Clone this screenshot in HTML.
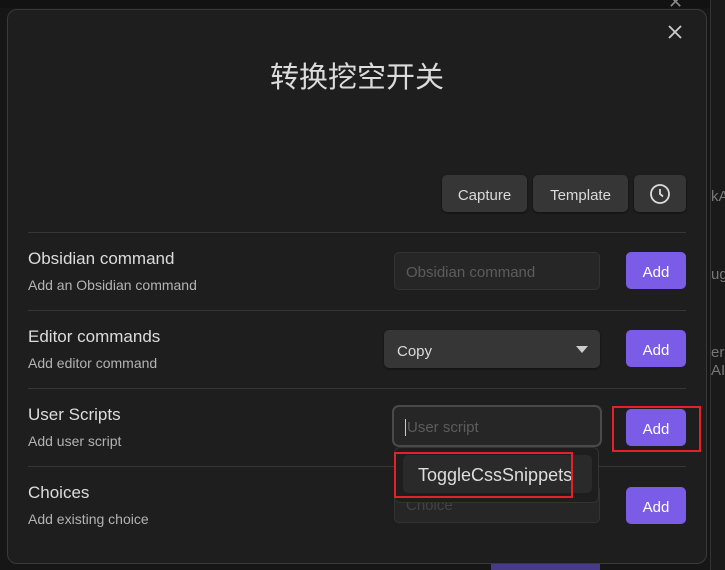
<!DOCTYPE html><html><head><meta charset="utf-8"><style>
body{margin:0;width:725px;height:570px;background:#161616;position:relative;overflow:hidden;font-family:"Segoe UI","Liberation Sans","Noto Sans CJK SC",sans-serif;color:#dadada}
.a{position:absolute;box-sizing:border-box;white-space:nowrap}
.modal{left:7px;top:9px;width:700px;height:555px;background:#1e1e1e;border:1px solid #3a3a3a;border-radius:10px}
.btn{background:#363636;border-radius:5px;color:#dadada;font-size:15px;display:flex;align-items:center;justify-content:center;box-shadow:0 1px 2px rgba(0,0,0,.5);padding-top:4px}
.add{background:#7b5ce6;border-radius:5px;color:#fff;font-size:15px;display:flex;align-items:center;justify-content:center;padding-top:3px}
.sep{left:28px;width:658px;height:1px;background:#363636}
.t{left:28px;font-size:17px;color:#dcdcdc}
.d{left:28px;font-size:14px;color:#b3b3b3}
.in{background:#262626;border:1px solid #333;border-radius:5px;color:#5c5c5c;font-size:15px;padding-left:11px;display:flex;align-items:center;padding-top:3px}
</style></head><body>
<div class="a" style="left:0;top:0;width:725px;height:8px;background:#121212"></div>
<div class="a" style="left:668px;top:-8px;font-size:18px;color:#888">✕</div>
<div class="a" style="left:710px;top:0;width:15px;height:570px;background:#1a1a1a;border-left:1px solid #333;overflow:hidden">
<div class="a" style="left:0;top:188px;font-size:15px;color:#777">kAc</div>
<div class="a" style="left:0;top:266px;font-size:15px;color:#777">ug</div>
<div class="a" style="left:0;top:344px;font-size:15px;color:#777;line-height:18px">er S<br>AI</div>
</div>
<div class="a" style="left:491px;top:563px;width:109px;height:7px;background:#483a8a"></div>
<div class="a modal"></div>
<svg class="a" style="left:668px;top:25px" width="14" height="14" stroke="#ccc" stroke-width="1.8"><path d="M1 1L13 13M13 1L1 13"/></svg>
<div class="a" style="left:0;width:714px;top:54px;text-align:center;font-size:29px;color:#dcdcdc">转换挖空开关</div>
<div class="a btn" style="left:442px;top:175px;width:85px;height:37px">Capture</div>
<div class="a btn" style="left:533px;top:175px;width:95px;height:37px">Template</div>
<div class="a btn" style="left:634px;top:175px;width:52px;height:37px;padding-top:0"><svg width="22" height="22" viewBox="0 0 22 22" fill="none" stroke="#ddd" stroke-width="1.8"><circle cx="11" cy="11" r="9"/><path d="M11 6v5l3 2.5"/></svg></div>
<div class="a sep" style="top:232px"></div>
<div class="a sep" style="top:310px"></div>
<div class="a sep" style="top:388px"></div>
<div class="a sep" style="top:466px"></div>
<div class="a t" style="top:249px">Obsidian command</div>
<div class="a d" style="top:277px">Add an Obsidian command</div>
<div class="a t" style="top:327px">Editor commands</div>
<div class="a d" style="top:355px">Add editor command</div>
<div class="a t" style="top:405px">User Scripts</div>
<div class="a d" style="top:433px">Add user script</div>
<div class="a t" style="top:483px">Choices</div>
<div class="a d" style="top:511px">Add existing choice</div>
<div class="a in" style="left:394px;top:252px;width:206px;height:38px">Obsidian command</div>
<div class="a add" style="left:626px;top:252px;width:60px;height:37px">Add</div>
<div class="a btn" style="left:384px;top:330px;width:216px;height:38px;justify-content:flex-start;padding-left:13px">Copy<svg class="a" style="left:192px;top:16px" width="12" height="7"><path d="M0 0h12L6 7z" fill="#ccc"/></svg></div>
<div class="a add" style="left:626px;top:330px;width:60px;height:37px">Add</div>
<div class="a in" style="left:392px;top:405px;width:210px;height:42px;border:2px solid #4a4a4a;border-radius:7px;padding-left:11px"><span style="border-left:1px solid #ccc;padding-left:1px">User script</span></div>
<div class="a add" style="left:626px;top:409px;width:60px;height:37px">Add</div>
<div class="a" style="left:612px;top:406px;width:89px;height:46px;border:2px solid #e5202b"></div>
<div class="a in" style="left:394px;top:485px;width:206px;height:38px;color:#444">Choice</div>
<div class="a add" style="left:626px;top:487px;width:60px;height:37px">Add</div>
<div class="a" style="left:394px;top:447px;width:205px;height:56px;background:#1e1e1e;border:1px solid #333;border-radius:6px"></div>
<div class="a" style="left:403px;top:455px;width:189px;height:38px;background:#2a2a2a;border-radius:5px;font-size:18px;color:#ddd;padding-left:15px;line-height:40px">ToggleCssSnippets</div>
<div class="a" style="left:394px;top:452px;width:179px;height:46px;border:2px solid #e5202b"></div>
</body></html>
